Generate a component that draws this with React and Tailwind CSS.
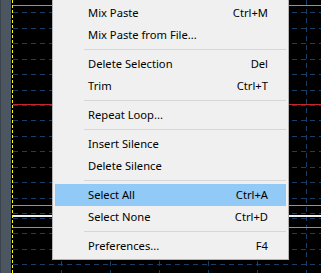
import React from "react";

const hRows = [12, 28, 43, 59, 74, 90, 105, 120, 136, 151, 167, 182, 198, 213, 218, 233, 249, 264];
const vCols = [61, 110, 159, 208, 257, 306];

function Background() {
  return (
    <svg width="321" height="273" viewBox="0 0 321 273" className="block" shapeRendering="crispEdges">
      <rect x="0" y="0" width="321" height="273" fill="#000000" />
      <rect x="0" y="0" width="11" height="273" fill="#4b5661" />
      <rect x="0" y="0" width="1" height="273" fill="#3a434b" />
      {hRows.map((y) => (
        <line key={"h" + y} x1="13" y1={y + 0.5} x2="321" y2={y + 0.5} stroke="#163e66" strokeWidth="1" strokeDasharray="5 4" />
      ))}
      {vCols.map((x) => (
        <line key={"v" + x} x1={x + 0.5} y1="0" x2={x + 0.5} y2="273" stroke="#163e66" strokeWidth="1" strokeDasharray="5 4" />
      ))}
      <rect x="13" y="5" width="308" height="1" fill="#8c939a" />
      <rect x="13" y="104" width="308" height="1" fill="#c4282b" />
      <rect x="13" y="205" width="308" height="1" fill="#8c939a" />
      <rect x="12" y="215" width="309" height="2" fill="#eeeeee" />
      <rect x="13" y="227" width="308" height="1" fill="#8c939a" />
      <line x1="12.5" y1="0" x2="12.5" y2="273" stroke="#ffff00" strokeWidth="1" strokeDasharray="3 2" />
    </svg>
  );
}

function Item({ label, shortcut, active }) {
  return (
    <div className={"flex h-[22px] items-center justify-between pl-[33px] pr-[18px] " + (active ? "bg-[#91c9f7]" : "")}>
      <span>{label}</span>
      {shortcut ? <span>{shortcut}</span> : null}
    </div>
  );
}

function Sep() {
  return (
    <div className="flex h-[7px] items-center pl-[29px]">
      <div className="h-px w-full bg-[#d7d7d7]" />
    </div>
  );
}

export default function App() {
  return (
    <div className="relative h-[273px] w-[321px] overflow-hidden bg-black">
      <Background />
      <div
        className="absolute left-[52px] top-[-1px] w-[237px] border border-[#b4b4b4] bg-[#f0f0f0] px-[2px] pt-[2px] pb-[2px] text-[11.2px] leading-none text-black"
        style={{ fontFamily: '"Noto Sans", "Open Sans", sans-serif' }}
      >
        <Item label="Mix Paste" shortcut="Ctrl+M" />
        <Item label="Mix Paste from File..." />
        <Sep />
        <Item label="Delete Selection" shortcut="Del" />
        <Item label="Trim" shortcut="Ctrl+T" />
        <Sep />
        <Item label="Repeat Loop..." />
        <Sep />
        <Item label="Insert Silence" />
        <Item label="Delete Silence" />
        <Sep />
        <Item label="Select All" shortcut="Ctrl+A" active />
        <Item label="Select None" shortcut="Ctrl+D" />
        <Sep />
        <Item label="Preferences..." shortcut="F4" />
      </div>
    </div>
  );
}
